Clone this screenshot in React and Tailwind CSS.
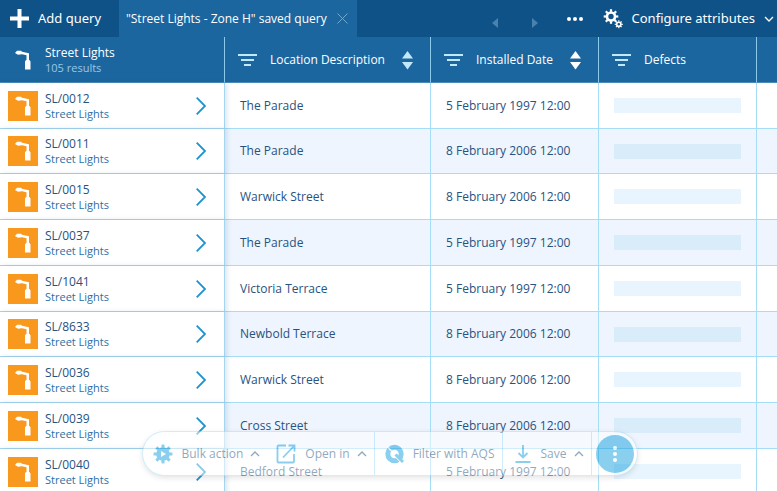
import React from "react";

const rows = [
  ["SL/0012", "The Parade", "5 February 1997 12:00"],
  ["SL/0011", "The Parade", "8 February 2006 12:00"],
  ["SL/0015", "Warwick Street", "8 February 2006 12:00"],
  ["SL/0037", "The Parade", "5 February 1997 12:00"],
  ["SL/1041", "Victoria Terrace", "5 February 1997 12:00"],
  ["SL/8633", "Newbold Terrace", "8 February 2006 12:00"],
  ["SL/0036", "Warwick Street", "8 February 2006 12:00"],
  ["SL/0039", "Cross Street", "8 February 2006 12:00"],
  ["SL/0040", "Bedford Street", "5 February 1997 12:00"],
];

const teeth = [0, 45, 90, 135, 180, 225, 270, 315];

function LampIcon({ className }) {
  return (
    <svg viewBox="0 0 30 30" className={className} fill="currentColor" aria-hidden="true">
      <path d="M7 8 9 5.800h4l1 1 7 1.400V15h.5l1 1.500v8h-5.500v-8l1-1.500h.5V10.200L14 9.300 12 9.500l-2 .3z" />
    </svg>
  );
}

function FilterIcon() {
  return (
    <svg viewBox="0 0 19 12" className="h-3 w-[19px]" fill="#c2e8fb" aria-hidden="true">
      <rect width="19" height="2" />
      <rect x="3" y="5" width="13" height="2" />
      <rect x="6" y="10" width="7" height="2" />
    </svg>
  );
}

function SortIcon({ className }) {
  return (
    <svg viewBox="0 0 11 19" className="h-[19px] w-[11px]" aria-hidden="true">
      <g className={className}>
        <path d="M5.500 0 11 7.500H0z" />
        <path d="M0 11h11l-5.500 7.500z" />
      </g>
    </svg>
  );
}

function Chevron({ up, className }) {
  return (
    <svg viewBox="0 0 10 6" className={className} fill="none" stroke="currentColor" strokeWidth="1.300" aria-hidden="true">
      <path d={up ? "M1 5l4-4 4 4" : "M1 1l4 4 4-4"} />
    </svg>
  );
}

function GearsIcon() {
  return (
    <svg viewBox="0 0 20 20" className="h-5 w-5" fill="none" stroke="currentColor" aria-hidden="true">
      <circle cx="8" cy="7.500" r="4" strokeWidth="2.600" />
      {teeth.map((a) => (
        <path key={a} d="M8 2.800V.2" strokeWidth="2.200" transform={`rotate(${a} 8 7.500)`} />
      ))}
      <circle cx="15.800" cy="15.300" r="2.100" strokeWidth="1.600" />
      {teeth.map((a) => (
        <path key={a} d="M15.800 12.800v-1.500" strokeWidth="1.200" transform={`rotate(${a} 15.800 15.300)`} />
      ))}
    </svg>
  );
}

function BulkIcon() {
  return (
    <svg viewBox="0 0 20 20" className="h-5 w-5 text-[#17a1df]" fill="currentColor" aria-hidden="true">
      <circle cx="10" cy="10" r="6.800" />
      {teeth.map((a) => (
        <rect key={a} x="8.500" y=".6" width="3" height="4" transform={`rotate(${a} 10 10)`} />
      ))}
      <path d="M8 7 13 10l-5 3z" fill="white" />
    </svg>
  );
}

function OpenIcon() {
  return (
    <svg viewBox="0 0 20 20" className="h-5 w-5 text-[#17a1df]" fill="none" stroke="currentColor" strokeWidth="1.800" aria-hidden="true">
      <path d="M10 1.500H2.500Q1.500 1.500 1.500 2.500v15q0 1 1 1H17q1 0 1-1V10M12.500 1.500H18.500V7.500M18 2 7 13.500" />
    </svg>
  );
}

function AqsIcon() {
  return (
    <svg viewBox="0 0 20 20" className="h-5 w-5 text-[#17a1df]" fill="none" stroke="currentColor" aria-hidden="true">
      <circle cx="9.500" cy="10" r="6.700" strokeWidth="5" />
      <path d="M6.500 7 2.500 3" stroke="white" strokeWidth="1.200" />
      <path d="M10 12.300 16 18.300" stroke="white" strokeWidth="1.200" />
      <path d="M10.500 10.500 18 18" strokeWidth="3" />
    </svg>
  );
}

function SaveIcon() {
  return (
    <svg viewBox="0 0 16 18" className="h-[18px] w-4 text-[#17a1df]" fill="none" stroke="currentColor" strokeWidth="1.800" aria-hidden="true">
      <path d="M8 0v12M3.500 8 8 12.500 12.500 8M.5 17h15" />
    </svg>
  );
}

function HeaderCell({ label, sort }) {
  return (
    <th scope="col" className="border-r border-b border-r-[#8cc9ea] border-b-[#4b8bb8] p-0 font-normal">
      <div className="flex items-center pt-px pr-[17px] pl-[13px]">
        <button type="button" aria-label={`Filter ${label}`}>
          <FilterIcon />
        </button>
        <span className="ml-[13px] flex-1 text-left text-[12px] font-medium whitespace-nowrap">{label}</span>
        {sort && (
          <button type="button" aria-label={`Sort by ${label}`}>
            <SortIcon className={sort} />
          </button>
        )}
      </div>
    </th>
  );
}

const cell = "border-r border-b border-[#a5dcf6] p-0 pl-[15px] text-[12px] text-[#28527f] whitespace-nowrap";

export default function App() {
  return (
    <div className="relative h-screen overflow-hidden bg-white font-['Open_Sans','Noto_Sans',sans-serif]">
      <header className="flex h-[37px] items-center bg-[#0f5288] font-['Noto_Sans','Open_Sans',sans-serif] text-[13px] text-white">
        <button type="button" className="flex h-full w-[119px] items-center gap-[9px] pl-[10px] whitespace-nowrap">
          <svg viewBox="0 0 19 19" className="h-[19px] w-[19px]" fill="currentColor" aria-hidden="true">
            <path d="M7.500 0h4v7.500H19v4h-7.500V19h-4v-7.500H0v-4h7.500z" />
          </svg>
          Add query
        </button>
        <div className="flex h-full w-[238px] items-center justify-between bg-[#1c669f] pr-[9px] pl-[7px]">
          <button type="button" className="font-['Open_Sans','Noto_Sans',sans-serif] text-[12px] font-medium whitespace-nowrap">
            "Street Lights - Zone H" saved query
          </button>
          <button type="button" aria-label="Close query">
            <svg viewBox="0 0 11 11" className="h-[11px] w-[11px]" stroke="#6fa9d0" aria-hidden="true">
              <path d="M.5.5l10 10M10.500.5l-10 10" />
            </svg>
          </button>
        </div>
        <div className="ml-auto flex items-center">
          <div className="flex gap-[34px] pt-2 text-[#4a82ae]">
            <button type="button" aria-label="Previous">
              <svg viewBox="0 0 6 10" className="h-[10px] w-[6px]" fill="currentColor" aria-hidden="true">
                <path d="M6 0v10L0 5z" />
              </svg>
            </button>
            <button type="button" aria-label="Next">
              <svg viewBox="0 0 6 10" className="h-[10px] w-[6px]" fill="currentColor" aria-hidden="true">
                <path d="M0 0v10l6-5z" />
              </svg>
            </button>
          </div>
          <button type="button" aria-label="More queries" className="ml-[29px]">
            <svg viewBox="0 0 16 4" className="h-1 w-4" fill="currentColor" aria-hidden="true">
              <circle cx="2" cy="2" r="2" />
              <circle cx="8" cy="2" r="2" />
              <circle cx="14" cy="2" r="2" />
            </svg>
          </button>
          <button type="button" className="ml-5 flex items-center whitespace-nowrap">
            <GearsIcon />
            <span className="ml-[9px]">Configure attributes</span>
            <Chevron className="mr-[3px] ml-[9px] h-[6px] w-[10px]" />
          </button>
        </div>
      </header>

      <table className="w-full table-fixed border-separate border-spacing-0">
        <colgroup>
          <col className="w-[225px]" />
          <col className="w-[206px]" />
          <col className="w-[168px]" />
          <col className="w-[158px]" />
          <col />
        </colgroup>
        <thead className="bg-[#1c669f] text-white">
          <tr className="h-[46px]">
            <th scope="col" className="border-r border-b border-r-[#8cc9ea] border-b-[#4b8bb8] p-0 text-left font-normal">
              <div className="flex items-center gap-[7px] pt-px pl-2">
                <LampIcon className="h-[30px] w-[30px]" />
                <div>
                  <div className="text-[12px] leading-[15px]">Street Lights</div>
                  <div className="text-[11px] leading-[15px] text-[#9cc6e4]">105 results</div>
                </div>
              </div>
            </th>
            <HeaderCell label="Location Description" sort="fill-[#c2e8fb]" />
            <HeaderCell label="Installed Date" sort="fill-white" />
            <HeaderCell label="Defects" />
            <th className="border-b border-b-[#4b8bb8] p-0" />
          </tr>
        </thead>
        <tbody>
          {rows.map(([id, place, date]) => (
            <tr key={id} className="group h-[46px] nth-[4n+2]:h-[45px] even:bg-[#eef5fe]">
              <td className="relative border-r border-b border-[#a5d5ef] bg-white p-0 shadow-[2px_0_5px_rgba(15,82,136,0.15)]">
                <div className="flex items-center gap-[7px] pr-[18px] pl-2">
                  <LampIcon className="h-[30px] w-[30px] bg-[#f8981d] text-white" />
                  <div className="flex-1">
                    <div className="text-[12px] leading-[15px] text-[#28527f]">{id}</div>
                    <div className="text-[11px] leading-[15px] text-[#2c6fa8]">Street Lights</div>
                  </div>
                  <button type="button" aria-label={`Open ${id}`}>
                    <svg viewBox="0 0 10 18" className="h-[18px] w-[10px]" fill="none" stroke="#1c93d1" strokeWidth="1.800" aria-hidden="true">
                      <path d="M.7.700 9 9 .7 17.300" />
                    </svg>
                  </button>
                </div>
              </td>
              <td className={cell}>{place}</td>
              <td className={cell}>{date}</td>
              <td className={cell}>
                <div className="mr-[15px] h-[15px] bg-[#e8f5fe] group-even:bg-[#d9ecfa]" />
              </td>
              <td className="border-b border-[#a5dcf6] p-0" />
            </tr>
          ))}
        </tbody>
      </table>

      <div className="absolute inset-x-0 bottom-[15px] flex justify-center pl-[3px]">
        <div className="flex h-[45px] items-stretch rounded-full border border-[#a5dcf6] bg-white text-[12px] whitespace-nowrap text-[#28527f] opacity-50 shadow-[0_2px_5px_rgba(0,0,0,0.2)]">
          <button type="button" className="flex items-center pl-[10px]">
            <BulkIcon />
            <span className="ml-2">Bulk action</span>
            <Chevron up className="ml-[7px] h-[6px] w-[10px]" />
          </button>
          <button type="button" className="flex items-center pr-[7px] pl-4">
            <OpenIcon />
            <span className="ml-[9px]">Open in</span>
            <Chevron up className="ml-[7px] h-[6px] w-[10px]" />
          </button>
          <button type="button" className="flex items-center border-l border-[#a5dcf6] pr-[7px] pl-[10px]">
            <AqsIcon />
            <span className="ml-2">Filter with AQS</span>
          </button>
          <button type="button" className="flex items-center border-x border-[#a5dcf6] pr-[7px] pl-3">
            <SaveIcon />
            <span className="ml-[10px]">Save</span>
            <Chevron up className="ml-[7px] h-[6px] w-[10px]" />
          </button>
          <button type="button" aria-label="More actions" className="mr-[3px] ml-1 flex h-[38px] w-[38px] items-center justify-center self-center rounded-full bg-[#17a1df]">
            <svg viewBox="0 0 4 16" className="h-4 w-1" fill="white" aria-hidden="true">
              <circle cx="2" cy="2" r="2" />
              <circle cx="2" cy="8" r="2" />
              <circle cx="2" cy="14" r="2" />
            </svg>
          </button>
        </div>
      </div>
    </div>
  );
}
